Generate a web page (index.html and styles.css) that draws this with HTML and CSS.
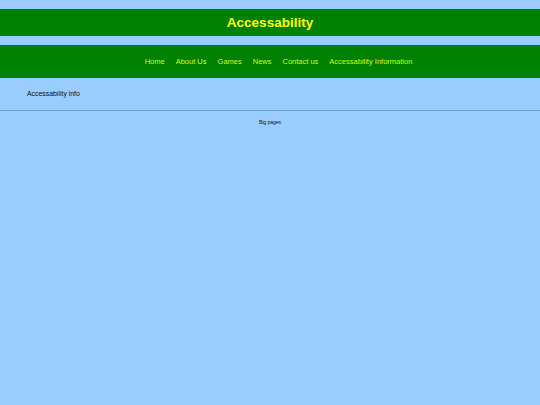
FILE: index.html
```
<!DOCTYPE html>
<html>
<head>
<meta charset="utf-8">
<link rel="stylesheet" href="styles.css">
</head>
<body>
<header class="banner"><h1 class="title">Accessability</h1></header>
<nav class="nav">
  <a href="#">Home</a>
  <a href="#">About Us</a>
  <a href="#">Games</a>
  <a href="#">News</a>
  <a href="#">Contact us</a>
  <a href="#">Accessability Information</a>
</nav>
<main class="content"><p class="info">Accessability info</p></main>
<hr class="rule">
<footer class="footer">Big pages</footer>
</body>
</html>
```
FILE: styles.css
```
html, body { margin: 0; padding: 0; }
body {
  background: #99ccff;
  font-family: "Liberation Sans", Arial, sans-serif;
  color: #111;
}
.banner {
  margin-top: 9px;
  height: 27px;
  background: #008000;
  display: flex;
  align-items: center;
  justify-content: center;
}
.title {
  margin: 0;
  font-size: 13.5px;
  font-weight: bold;
  color: #ffff00;
}
.nav {
  margin-top: 9px;
  height: 33px;
  padding-left: 17px;
  background: #008000;
  display: flex;
  align-items: center;
  justify-content: center;
  gap: 11px;
}
.nav a {
  color: #ccff00;
  font-size: 7.5px;
  text-decoration: none;
}
.content { padding: 12px 27px 0; }
.info { margin: 0; font-size: 6.9px; line-height: 8px; }
.rule {
  margin: 12px 0 0;
  border: 0;
  border-top: 1px solid #7a9cc8;
  height: 0;
}
.footer {
  text-align: center;
  font-size: 5px;
  line-height: 6px;
  margin-top: 8px;
}
```
